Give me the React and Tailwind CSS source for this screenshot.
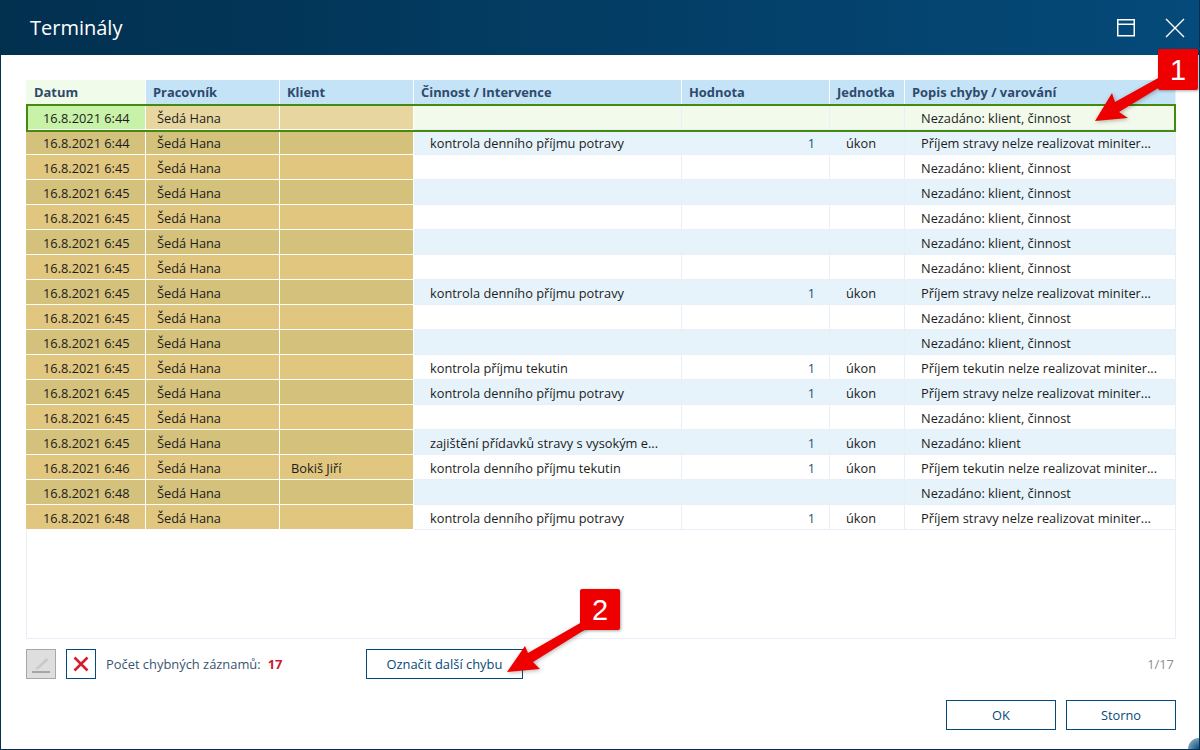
const columns = 'grid grid-cols-[119px_1px_133px_1px_133px_1px_267px_1px_147px_1px_74px_1px_270px] grid-rows-[25px]'

const KONTROLA = 'kontrola denního příjmu potravy'
const STRAVA = 'Příjem stravy nelze realizovat miniter...'
const NEZADANO = 'Nezadáno: klient, činnost'

const rows = [
  { time: '6:44', problem: NEZADANO },
  { time: '6:44', activity: KONTROLA, value: 1, unit: 'úkon', problem: STRAVA },
  { time: '6:45', problem: NEZADANO },
  { time: '6:45', problem: NEZADANO },
  { time: '6:45', problem: NEZADANO },
  { time: '6:45', problem: NEZADANO },
  { time: '6:45', problem: NEZADANO },
  { time: '6:45', activity: KONTROLA, value: 1, unit: 'úkon', problem: STRAVA },
  { time: '6:45', problem: NEZADANO },
  { time: '6:45', problem: NEZADANO },
  { time: '6:45', activity: 'kontrola příjmu tekutin', value: 1, unit: 'úkon', problem: 'Příjem tekutin nelze realizovat miniter...' },
  { time: '6:45', activity: KONTROLA, value: 1, unit: 'úkon', problem: STRAVA },
  { time: '6:45', problem: NEZADANO },
  { time: '6:45', activity: 'zajištění přídavků stravy s vysokým e...', value: 1, unit: 'úkon', problem: 'Nezadáno: klient' },
  { time: '6:46', client: 'Bokiš Jiří', activity: 'kontrola denního příjmu tekutin', value: 1, unit: 'úkon', problem: 'Příjem tekutin nelze realizovat miniter...' },
  { time: '6:48', problem: NEZADANO },
  { time: '6:48', activity: KONTROLA, value: 1, unit: 'úkon', problem: STRAVA },
]

function Row({ row, index }) {
  const selected = index === 0
  const even = index % 2 === 1
  const tan = selected ? 'bg-[#e8d6a0]' : even ? 'bg-[#d4c17c]' : 'bg-[#e0c67f]'
  const plain = selected ? 'bg-[#f2faeb]' : even ? 'bg-[#e6f3fb]' : 'bg-white'
  const first = selected ? 'bg-[#c8f2a8]' : tan

  return (
    <div className={`${columns} relative h-[25px] text-[12.8px] leading-[22px] text-[#1c1c1c]`}>
      <div className={`${first} pt-[2px] pl-[17px] border-b border-white whitespace-nowrap`}>16.8.2021 {row.time}</div>
      <div className="bg-white" />
      <div className={`${tan} pt-[2px] pl-[11px] border-b border-white`}>Šedá Hana</div>
      <div className="bg-white" />
      <div className={`${tan} pt-[2px] pl-[11px] border-b border-white`}>{row.client}</div>
      <div className="bg-white" />
      <div className={`${plain} pt-[2px] pl-[16px] border-b border-[#e9eff8] whitespace-nowrap`}>{row.activity}</div>
      <div className="bg-[#e9eff8]" />
      <div className={`${plain} pt-[2px] pr-[14px] text-right text-[#1f4f78] border-b border-[#e9eff8]`}>{row.value}</div>
      <div className="bg-[#e9eff8]" />
      <div className={`${plain} pt-[2px] pl-[16px] border-b border-[#e9eff8]`}>{row.unit}</div>
      <div className="bg-[#e9eff8]" />
      <div className={`${plain} pt-[2px] pl-[16px] border-b border-[#e9eff8] whitespace-nowrap`}>{row.problem}</div>
      {selected && <div className="absolute z-10 left-0 right-0 top-[-1px] h-[28px] border-2 border-[#458a10]" />}
    </div>
  )
}

function HeaderCell({ label, className = 'bg-[#c5e3f6] pl-[7px]' }) {
  return <div className={`${className} pt-[1px] whitespace-nowrap`}>{label}</div>
}

function Callout({ n, className }) {
  return (
    <div className={`absolute z-20 w-[40px] h-[41px] rounded-[2px] bg-[#ee0000] text-white font-['Liberation_Sans',sans-serif] text-[29px] leading-[42px] text-center shadow-[1px_1px_3px_rgba(0,0,0,0.35)] ${className}`}>
      {n}
    </div>
  )
}

export default function App() {
  return (
    <div className="relative w-[1200px] h-[750px] overflow-hidden bg-white border-x border-b border-[#02304f] font-['Open_Sans',sans-serif]">
      <header className="-mx-px h-[55px] flex items-center justify-between bg-gradient-to-r from-[#02304f] to-[#054a7a] pl-[30px] pr-[15px]">
        <h1 className="text-[20px] text-white">Terminály</h1>
        <div className="flex items-center gap-[30px]">
          <svg width="18" height="18" viewBox="0 0 18 18" fill="none" stroke="#fff" strokeWidth="1.5">
            <rect x="0.75" y="0.75" width="16.5" height="16" />
            <path d="M0.75 5.25h16.5" />
          </svg>
          <svg width="20" height="20" viewBox="0 0 20 20" fill="none" stroke="#fff" strokeWidth="1.4">
            <path d="M1 1l18 18M19 1L1 19" />
          </svg>
        </div>
      </header>

      <main className="pl-[25px] pr-[23px] pt-[25px]">
        <section className="w-[1150px] h-[559px] border-x border-b border-[#e9eff8]">
          <div className={`${columns} -mx-px h-[25px] text-[12.9px] font-bold leading-[23px] text-[#2e4a6e] bg-[#e9eff8]`}>
            <HeaderCell label="Datum" className="bg-[#f1fbe9] pl-[8px]" />
            <div className="bg-white" />
            <HeaderCell label="Pracovník" />
            <div className="bg-white" />
            <HeaderCell label="Klient" />
            <div className="bg-white" />
            <HeaderCell label="Činnost / Intervence" />
            <div className="bg-white" />
            <HeaderCell label="Hodnota" />
            <div className="bg-white" />
            <HeaderCell label="Jednotka" />
            <div className="bg-white" />
            <HeaderCell label="Popis chyby / varování" />
          </div>
          <div className="-mx-px">
            {rows.map((row, index) => (
              <Row key={index} row={row} index={index} />
            ))}
          </div>
        </section>

        <div className="mt-[10px] h-[30px] flex items-center text-[12.9px]">
          <button className="w-[30px] h-[30px] flex items-center justify-center bg-[#dedede] border border-[#a8a8a8]">
            <svg width="20" height="20" viewBox="0 0 20 20" fill="none">
              <path d="M5.5 13.5L15.5 4l2 2L7.5 15l-3 1z" fill="#c8c8c8" />
              <path d="M1 18h18" stroke="#a6a6a6" strokeWidth="2" />
            </svg>
          </button>
          <button className="ml-[10px] w-[30px] h-[30px] flex items-center justify-center border border-[#054a7a]">
            <svg width="16" height="16" viewBox="0 0 16 16" fill="none" stroke="#d0202f" strokeWidth="2.6">
              <path d="M1.5 1.5l13 13M14.5 1.5l-13 13" />
            </svg>
          </button>
          <span className="ml-[10px] pt-[1px] text-[#3a5470]">Počet chybných záznamů:</span>
          <span className="ml-[7px] pt-[1px] font-bold text-[#d3172f]">17</span>
          <button className="ml-[84px] w-[157px] h-[30px] pt-[1px] border border-[#054a7a] text-[#054a7a] pr-[1px]">Označit další chybu</button>
          <span className="ml-auto pr-[2px] pt-[1px] text-[#8e8e8e]">1/17</span>
        </div>

        <div className="mt-[21px] flex justify-end gap-[10px] text-[12.8px] text-[#054a7a]">
          <button className="w-[110px] h-[30px] pt-[1px] border border-[#054a7a]">OK</button>
          <button className="w-[110px] h-[30px] pt-[1px] border border-[#054a7a]">Storno</button>
        </div>
      </main>

      {/* annotations over the dialog */}
      <svg className="absolute z-20 left-[-1px] top-0 pointer-events-none drop-shadow-[1px_1px_2px_rgba(0,0,0,0.3)]" width="1200" height="750" fill="#ee0000">
        <path d="M1095 121L1112 93L1115 102L1160 77L1160 87L1119 112L1128 118z" />
        <path d="M507 672L525 646L528 653L582 622L586 629L533 662L540 669z" />
      </svg>
      <Callout n="1" className="left-[1157px] top-[49px]" />
      <Callout n="2" className="left-[579px] top-[589px]" />
      <div className="absolute right-0 bottom-0 w-[11px] h-[11px] rounded-tl-full bg-[radial-gradient(circle_at_100%_100%,#054a7a,#a9c4d6)]" />
    </div>
  )
}
